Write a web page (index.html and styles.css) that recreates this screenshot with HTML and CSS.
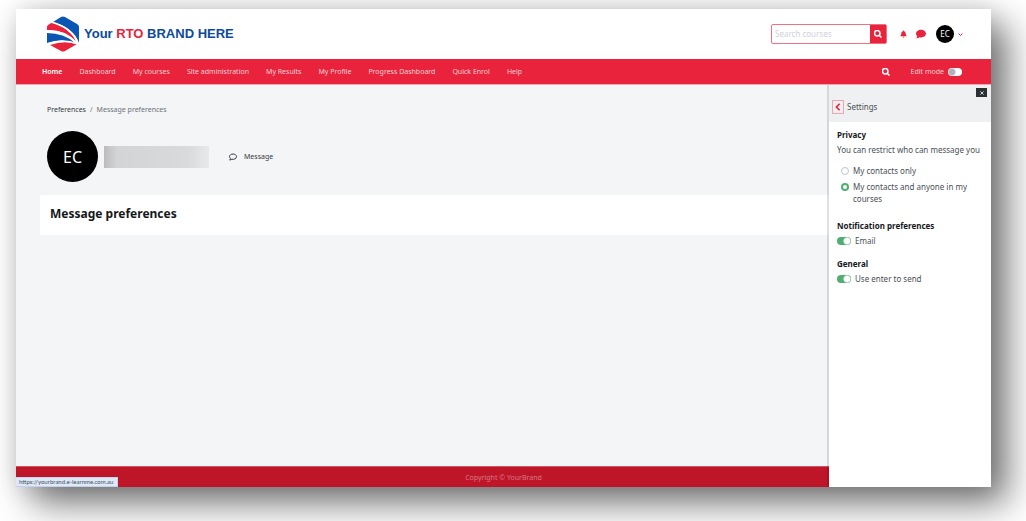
FILE: index.html
```
<!DOCTYPE html>
<html lang="en">

<head>
    <meta charset="UTF-8">
    <meta name="viewport" content="width=device-width, initial-scale=1.0">
    <title>Message preferences</title>
    <link rel="stylesheet" href="styles.css">
</head>

<body>
    <div class="window">
        <header class="header">
            <a class="brand" href="#">
                <svg class="brand-logo" viewBox="0 0 32 36" aria-hidden="true">
                    <path fill="#0b56b3" d="M14 1Q16 0 18 1L30 8Q32 9 32 11V27Q27 12 6 6Z" />
                    <path fill="#e8233b" d="M5 6.500 1 9Q0 10 0 11V14Q17 13 29 25Q22 11 5 6.500Z" />
                    <path fill="#0b56b3" d="M0 17V27Q15 22 28 27Q17 17 0 17Z" />
                    <path fill="#e8233b" d="M3 29 14 35Q16 36 18 35L30 28Q17 24 3 29Z" />
                    <path fill="none" stroke="#fff" stroke-width="1.500" d="M4 6Q24 11 31 27M0 15Q17 14 30 27M0 28Q15 22 31 28" />
                </svg>
                <span class="brand-name">Your <em>RTO</em> BRAND HERE</span>
            </a>
            <form class="search">
                <input type="text" placeholder="Search courses" aria-label="Search courses">
                <button type="submit" aria-label="Search">
                    <svg viewBox="0 0 16 16"><path class="line" d="M10.500 10.500 15 15M12 6.500a5.500 5.500 0 1 1-11 0a5.500 5.500 0 1 1 11 0Z" /></svg>
                </button>
            </form>
            <button class="bell" aria-label="Notifications">
                <svg viewBox="0 0 16 16"><path d="M8 0a1 1 0 0 0-1 1.500C4.500 2 3 4 3 6.500C3 9.500 2 10.500 1 12v1h14v-1c-1-1.500-2-2.500-2-5.500C13 4 11.500 2 9 1.500A1 1 0 0 0 8 0ZM6 14a2 2 0 0 0 4 0Z" /></svg>
            </button>
            <button class="chat" aria-label="Messages">
                <svg viewBox="0 0 16 16"><path d="M8 1C3.600 1 0 3.800 0 7.300C0 9 .8 10.400 2 11.500C1.800 13 1 14.200.3 15C2.500 15 4.300 14 5.300 13.200C11 14.500 16 11.500 16 7.300C16 3.800 12.400 1 8 1Z" /></svg>
            </button>
            <button class="user-menu" aria-label="User menu">
                <span class="avatar">EC</span>
                <svg viewBox="0 0 10 10"><path class="line" d="M1 3 5 7 9 3" /></svg>
            </button>
        </header>

        <nav class="navbar">
            <a class="active" href="#">Home</a>
            <a href="#">Dashboard</a>
            <a href="#">My courses</a>
            <a href="#">Site administration</a>
            <a href="#">My Results</a>
            <a href="#">My Profile</a>
            <a href="#">Progress Dashboard</a>
            <a href="#">Quick Enrol</a>
            <a href="#">Help</a>
            <button class="nav-search" aria-label="Search">
                <svg viewBox="0 0 16 16"><path class="line" d="M10.500 10.500 15 15M12 6.500a5.500 5.500 0 1 1-11 0a5.500 5.500 0 1 1 11 0Z" /></svg>
            </button>
            <label for="edit-mode">Edit mode</label>
            <input class="switch" type="checkbox" id="edit-mode">
        </nav>

        <div class="content">
            <main class="main">
                <div class="breadcrumb">
                    <a href="#">Preferences</a>
                    <span>/</span>
                    <span>Message preferences</span>
                </div>
                <div class="profile">
                    <span class="avatar large">EC</span>
                    <span class="hidden-name"></span>
                    <a class="message-link" href="#">
                        <svg viewBox="0 0 16 16"><path class="line" d="M8 2C4 2 1 4.300 1 7.300C1 9 2 10.300 3 11.200C2.800 12.400 2 13.300 1.300 14C3.500 14 4.800 13.200 5.600 12.500C10.500 13.400 15 11 15 7.300C15 4.300 12 2 8 2Z" /></svg>
                        Message
                    </a>
                </div>
                <section class="card">
                    <h1>Message preferences</h1>
                </section>
            </main>

            <footer class="footer">Copyright © YourBrand</footer>

            <aside class="drawer">
                <div class="drawer-header">
                    <button class="close" aria-label="Close">
                        <svg viewBox="0 0 10 10"><path class="line" d="M1 1 9 9M9 1 1 9" /></svg>
                    </button>
                    <div class="drawer-title">
                        <button class="back" aria-label="Back">
                            <svg viewBox="0 0 10 10"><path class="line" d="M7 1 3 5 7 9" /></svg>
                        </button>
                        <span>Settings</span>
                    </div>
                </div>
                <div class="drawer-body">
                    <h2>Privacy</h2>
                    <p>You can restrict who can message you</p>
                    <div class="option">
                        <input type="radio" name="privacy" id="contacts">
                        <label for="contacts">My contacts only</label>
                    </div>
                    <div class="option">
                        <input type="radio" name="privacy" id="courses" checked>
                        <label for="courses">My contacts and anyone in my courses</label>
                    </div>
                    <h2>Notification preferences</h2>
                    <div class="toggle">
                        <input class="switch" type="checkbox" id="email" checked>
                        <label for="email">Email</label>
                    </div>
                    <h2>General</h2>
                    <div class="toggle">
                        <input class="switch" type="checkbox" id="enter" checked>
                        <label for="enter">Use enter to send</label>
                    </div>
                </div>
            </aside>
        </div>
        <div class="status">https://yourbrand.e-learnme.com.au</div>
    </div>
</body>

</html>
```
FILE: styles.css
```
* {
    box-sizing: border-box;
}

body {
    margin: 0;
    padding: 9px 35px 34px 16px;
    background-color: #fff;
    font-family: "Noto Sans", "Open Sans", sans-serif;
    font-size: 8px;
    line-height: 12px;
    color: #495057;
}

a {
    color: inherit;
    text-decoration: none;
}

button {
    display: flex;
    align-items: center;
    justify-content: center;
    padding: 0;
    border: none;
    background: none;
    font: inherit;
    color: inherit;
    cursor: pointer;
}

svg {
    display: block;
    width: 8px;
    height: 8px;
    fill: currentColor;
}

.line {
    fill: none;
    stroke: currentColor;
    stroke-width: 2;
}

.window {
    position: relative;
    display: flex;
    flex-direction: column;
    min-height: calc(100vh - 43px);
    background-color: #f4f5f7;
    box-shadow: 0 0 22px rgba(0, 0, 0, 0.12), 16px 16px 34px rgba(0, 0, 0, 0.55);
}

/* header */
.header {
    display: flex;
    align-items: center;
    height: 50px;
    padding: 0 28px 0 31px;
    background-color: #fff;
    color: #e8233b;
}

.brand {
    display: flex;
    align-items: center;
    gap: 5px;
    margin-right: auto;
}

.brand-logo {
    width: 32px;
    height: 36px;
}

.brand-name {
    font-family: "Liberation Sans", Arial, sans-serif;
    font-size: 13px;
    font-weight: bold;
    color: #0b4a9c;
}

.brand-name em {
    font-style: normal;
    color: #e8233b;
}

.search {
    display: flex;
    width: 116px;
    height: 20px;
    margin-right: 12px;
    border: 1px solid #ee7182;
    border-radius: 2px;
}

.search input {
    flex: 1;
    min-width: 0;
    padding: 0 3px;
    border: none;
    background: none;
    font: inherit;
}

.search input::placeholder {
    color: #ced2d6;
}

.search button {
    width: 16px;
    background-color: #e8233b;
    color: #fff;
}

.search .line,
.nav-search .line {
    stroke-width: 3;
}

.bell {
    width: 8px;
    margin-right: 9px;
}

.bell svg {
    width: 7px;
}

.chat svg {
    width: 10px;
    height: 10px;
}

.user-menu {
    gap: 4px;
    margin-left: 10px;
}

.user-menu svg {
    width: 5px;
    height: 5px;
}

.user-menu .line {
    stroke: #e8233b;
}

.avatar {
    display: flex;
    align-items: center;
    justify-content: center;
    width: 18px;
    height: 18px;
    border-radius: 50%;
    background-color: #000;
    color: #fff;
}

.avatar.large {
    width: 51px;
    height: 51px;
    font-size: 16px;
}

/* navigation */
.navbar {
    display: flex;
    align-items: center;
    gap: 17px;
    height: 26px;
    padding: 0 29px 0 26px;
    border-bottom: 1px solid #f3a5af;
    background-color: #e8233b;
    font-size: 7px;
    color: #fbd0d6;
}

.navbar .active {
    font-weight: 600;
    color: #fff;
}

.nav-search {
    margin-left: auto;
    margin-right: 4px;
    color: #fff;
}

.navbar label {
    margin-right: -13px;
}

.switch {
    appearance: none;
    width: 14px;
    height: 8px;
    margin: 0;
    border-radius: 4px;
    background: radial-gradient(circle at 4px 4px, #adb5bd 3px, #fff 4px);
}

.switch:checked {
    background: radial-gradient(circle at 10px 4px, #fff 3px, #4fae70 4px);
}

/* page content */
.content {
    position: relative;
    flex: 1;
    display: flex;
    flex-direction: column;
}

.main {
    flex: 1;
    padding: 19px 24px;
}

.breadcrumb {
    display: flex;
    gap: 4px;
    padding: 0 7px;
    font-size: 7px;
    color: #6b7278;
}

.breadcrumb a {
    color: #343a40;
}

.profile {
    display: flex;
    align-items: center;
    margin: 15px 7px 13px;
}

.hidden-name {
    width: 105px;
    height: 22px;
    margin: 0 20px 0 6px;
    background: linear-gradient(90deg, #bbb, #d3d4d5 12%, #d9dadb 80%, #e8e9eb);
}

.message-link {
    display: flex;
    align-items: center;
    gap: 7px;
    font-size: 7px;
    color: #343a40;
}

.card {
    padding: 10px;
    height: 40px;
    border-radius: 2px;
    background-color: #fff;
}

h1 {
    margin: 0;
    font-size: 12px;
    line-height: 17px;
    color: #15181b;
}

.footer {
    height: 21px;
    border-top: 1px solid #d65565;
    background-color: #bf1529;
    line-height: 22px;
    text-align: center;
    font-size: 7px;
    color: #d97782;
}

/* message drawer */
.drawer {
    position: absolute;
    top: 0;
    right: 0;
    bottom: 0;
    width: 162px;
    background-color: #fff;
    box-shadow: -2px 0 0 rgba(0, 0, 0, 0.12);
}

.drawer-header {
    height: 37px;
    padding: 3px 4px 3px 3px;
    background-color: #eff0f2;
}

.close {
    width: 11px;
    height: 9px;
    margin-left: auto;
    background-color: #2b3035;
    color: #fff;
}

.close svg {
    width: 4px;
    height: 4px;
}

.drawer-title {
    display: flex;
    align-items: center;
    gap: 3px;
    margin-top: 3px;
}

.back {
    width: 12px;
    height: 14px;
    border: 1px solid #f3a5af;
    color: #e8233b;
}

.drawer-body {
    padding: 7px 8px;
}

.drawer-body p {
    margin: 3px 0 9px;
    white-space: nowrap;
}

h2 {
    margin: 0;
    font-size: 8px;
    line-height: 12px;
    color: #15181b;
}

.option,
.toggle {
    display: flex;
    align-items: flex-start;
    gap: 4px;
}

.option {
    margin: 0 0 4px 4px;
}

.option input {
    appearance: none;
    width: 8px;
    height: 8px;
    margin: 2px 0 0;
    border: 1px solid #bfc5ca;
    border-radius: 50%;
}

.option input:checked {
    border: 2px solid #4fae70;
}

.option label {
    flex: 1;
}

.option + h2 {
    margin-top: 15px;
}

.toggle {
    align-items: center;
    margin: 3px 0 11px;
}

/* browser link preview */
.status {
    position: absolute;
    left: 0;
    bottom: 0;
    padding: 0 4px 0 3px;
    border: 1px solid #c3d2ea;
    border-left: none;
    background-color: #dde8f9;
    font-family: Lato, sans-serif;
    font-size: 6px;
    line-height: 8px;
}
```
